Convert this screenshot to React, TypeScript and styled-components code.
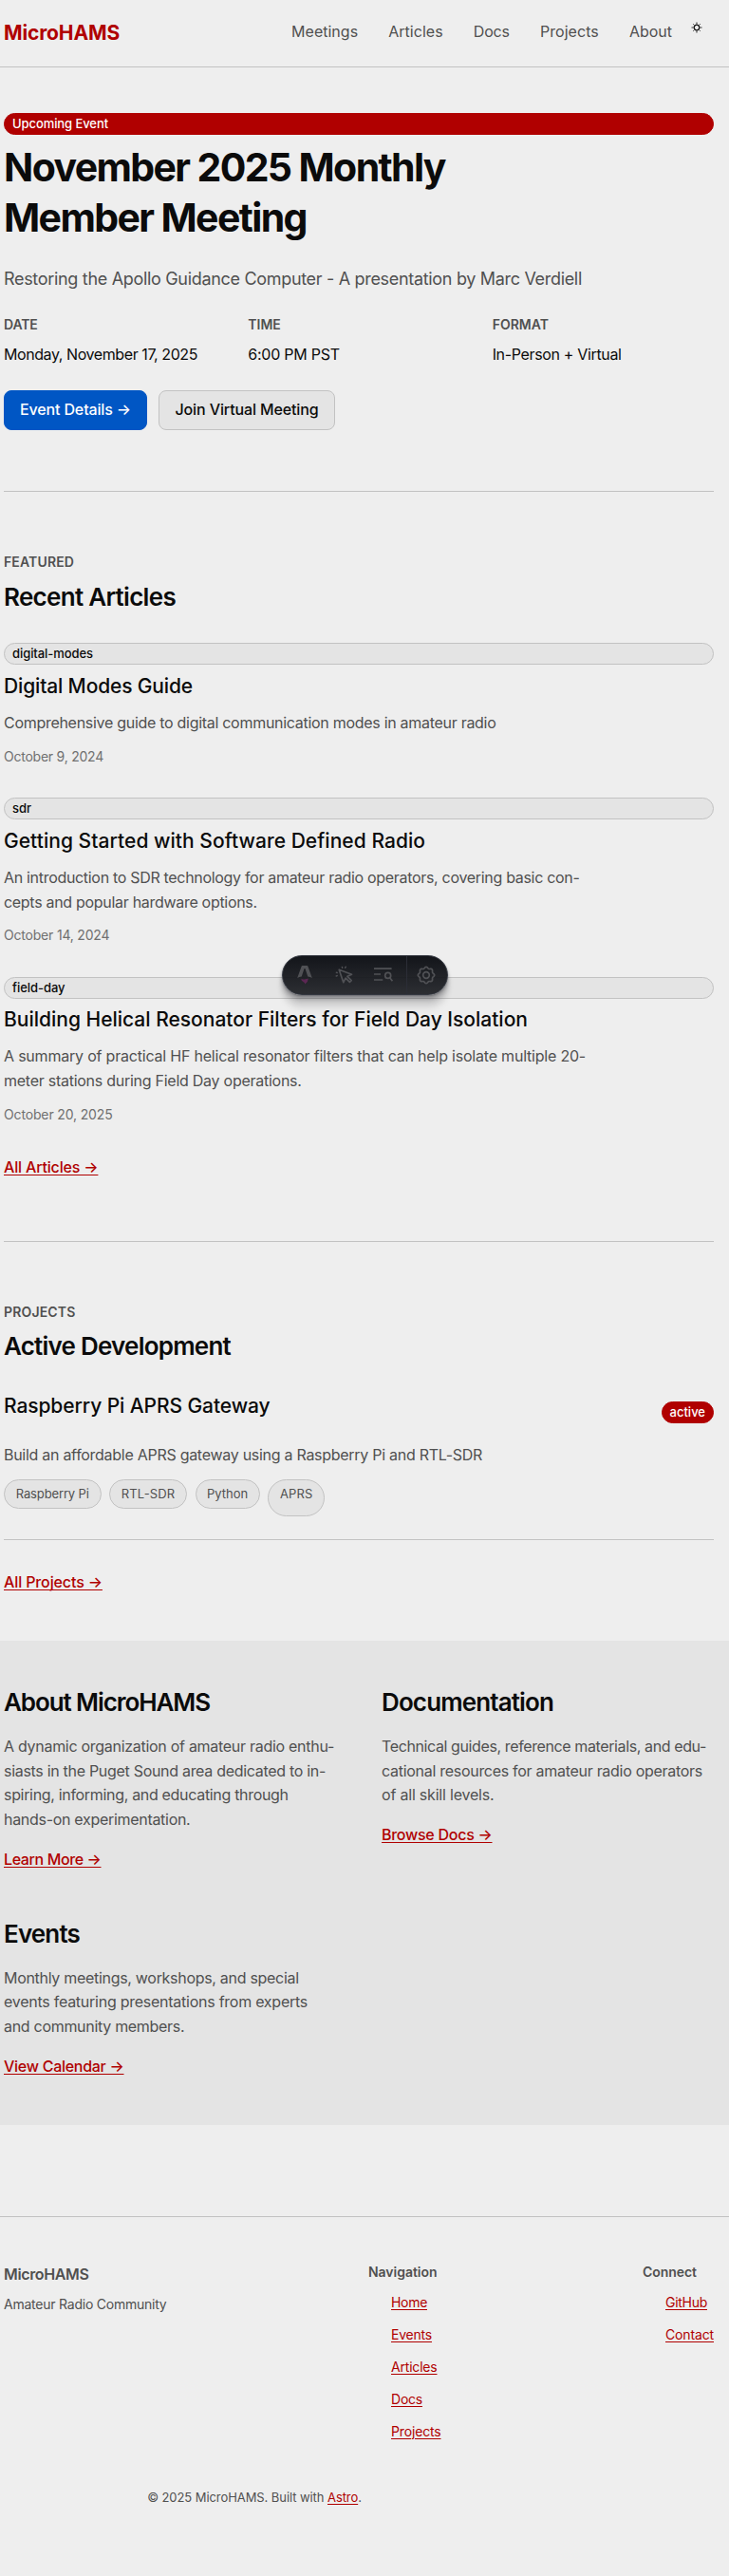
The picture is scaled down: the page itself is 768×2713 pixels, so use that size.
import React from "react";
import styled, { createGlobalStyle, css } from "styled-components";

const color = {
  bg: "#eeeeee",
  surface: "#e4e4e4",
  line: "#c2c2c2",
  ink: "#0b0b0b",
  muted: "#505050",
  faint: "#707070",
  red: "#b00000",
  blue: "#0056c4",
};

const GlobalStyle = createGlobalStyle`
  *, *::before, *::after { box-sizing: border-box; }
  html, body { margin: 0; background: ${color.bg}; }
  body {
    color: ${color.ink};
    font-family: Inter, "Liberation Sans", sans-serif;
    font-size: 16px;
    -webkit-font-smoothing: antialiased;
  }
  h1, h2, h3, h4, p, ul { margin: 0; padding: 0; }
  a { color: inherit; text-decoration: none; }
`;

type Tracked = { $ls?: number };
const tracking = css<Tracked>`
  letter-spacing: ${({ $ls = 0 }) => $ls}px;
  white-space: nowrap;
`;

const Page = styled.div`
  position: relative;
  min-height: 2713px;
`;

/* Header */
const Header = styled.header`
  display: flex;
  align-items: flex-start;
  justify-content: space-between;
  height: 71px;
  padding: 0 28px 0 4px;
  border-bottom: 1px solid ${color.line};
`;
const Logo = styled.a<Tracked>`
  margin-top: 23px;
  color: ${color.red};
  font-size: 21px;
  font-weight: 700;
  line-height: 24px;
  ${tracking}
`;
const Nav = styled.nav`
  display: flex;
  gap: 32.1px;
  margin-top: 20.5px;
`;
const NavLink = styled.a<Tracked>`
  color: ${color.muted};
  line-height: 24px;
  ${tracking}
`;
const ThemeToggle = styled.span`
  display: block;
  width: 12px;
  height: 12px;
  margin: 2px 0 0 -12.1px;
  svg { display: block; }
`;

/* Shared parts */
const Main = styled.main`
  padding: 0 16px 0 4px;
`;
const Section = styled.section<{ $top: number; $bottom: number; $rule?: boolean }>`
  padding: ${({ $top }) => $top}px 0 ${({ $bottom }) => $bottom}px;
  border-bottom: ${({ $rule }) => ($rule ? `1px solid ${color.line}` : "none")};
`;
const Badge = styled.span<Tracked & { $accent?: boolean }>`
  display: block;
  height: 23.25px;
  padding: 0 8px;
  border: 1px solid ${({ $accent }) => ($accent ? color.red : color.line)};
  border-radius: 12px;
  background: ${({ $accent }) => ($accent ? color.red : color.surface)};
  color: ${({ $accent }) => ($accent ? "#fff" : color.ink)};
  font-size: 13px;
  font-weight: 500;
  line-height: 21px;
  ${tracking}
`;
const Label = styled.div<Tracked>`
  color: ${color.muted};
  font-size: 14px;
  font-weight: 600;
  line-height: 18px;
  ${tracking}
`;
const Heading = styled.h2<Tracked>`
  font-size: 26px;
  font-weight: 600;
  line-height: 32px;
  ${tracking}
`;
const SectionHeading = styled(Heading)`
  margin-top: 11.5px;
`;
const Title = styled.h3<Tracked>`
  font-size: 21px;
  font-weight: 500;
  line-height: 28px;
  ${tracking}
`;
const Copy = styled.p`
  color: ${color.muted};
  line-height: 25.6px;
`;
const Line = styled.span<Tracked>`
  display: block;
  ${tracking}
`;
const MoreLink = styled.a<Tracked>`
  display: block;
  width: fit-content;
  color: ${color.red};
  font-weight: 500;
  line-height: 24px;
  text-decoration: underline 1px;
  text-underline-offset: 2px;
  text-decoration-skip-ink: none;
  ${tracking}
`;

/* Hero */
const HeroTitle = styled.h1`
  margin-top: 7.75px;
  font-size: 41px;
  font-weight: 700;
  line-height: 53px;
`;
const Subtitle = styled.p<Tracked>`
  margin-top: 24px;
  color: ${color.muted};
  font-size: 18px;
  line-height: 28px;
  ${tracking}
`;
const Facts = styled.div`
  display: grid;
  grid-template-columns: repeat(3, 1fr);
  gap: 24px;
  margin-top: 25px;
`;
const FactValue = styled.div<Tracked>`
  margin-top: 10px;
  line-height: 24px;
  ${tracking}
`;
const Actions = styled.div`
  display: flex;
  gap: 12px;
  margin-top: 26px;
`;
const Button = styled.a<Tracked & { $primary?: boolean; $width: number }>`
  width: ${({ $width }) => $width}px;
  height: 42px;
  border: 1px solid ${({ $primary }) => ($primary ? color.blue : color.line)};
  border-radius: 8px;
  background: ${({ $primary }) => ($primary ? color.blue : color.surface)};
  color: ${({ $primary }) => ($primary ? "#fff" : color.ink)};
  font-weight: 500;
  line-height: 39px;
  text-align: center;
  ${tracking}
`;

/* Articles */
const ArticleList = styled.div`
  display: flex;
  flex-direction: column;
  gap: 33.4px;
  margin: 32.7px 0 33px;
`;
const ArticleTitle = styled(Title)`
  margin: 8.2px 0 12.4px;
`;
const DateText = styled.time<Tracked>`
  display: block;
  margin-top: 12.1px;
  color: ${color.faint};
  font-size: 14px;
  line-height: 20px;
  ${tracking}
`;

/* Projects */
const Project = styled.article`
  padding-bottom: 24px;
  margin: 32.5px 0 32px;
  border-bottom: 1px solid ${color.line};
`;
const ProjectHead = styled.div`
  display: flex;
  justify-content: space-between;
  height: 53.4px;
  & > ${Badge} { margin-top: 9px; height: 23px; }
`;
const Tags = styled.div`
  display: flex;
  align-items: flex-start;
  gap: 8.8px;
  margin-top: 12.2px;
`;
const Tag = styled.span<Tracked & { $width: number; $tall?: boolean }>`
  width: ${({ $width }) => $width}px;
  height: ${({ $tall }) => ($tall ? 39 : 31)}px;
  border: 1px solid ${color.line};
  border-radius: 20px;
  background: ${color.surface};
  color: ${color.muted};
  font-size: 13px;
  line-height: 28px;
  text-align: center;
  ${tracking}
`;

/* Info band */
const Band = styled.section`
  display: grid;
  grid-template-columns: 350px 350px;
  column-gap: 48px;
  row-gap: 50.8px;
  height: 510px;
  align-content: start;
  padding: 49.3px 16px 0 4px;
  background: ${color.surface};
`;
const BandCopy = styled(Copy)`
  margin: 18px 0 16.6px;
`;

/* Footer */
const Footer = styled.footer`
  margin-top: 96px;
  padding: 48px 16px 0 4px;
  border-top: 1px solid ${color.line};
  color: ${color.muted};
`;
const FooterColumns = styled.div`
  display: flex;
  justify-content: space-between;
`;
const FooterBrand = styled.div<Tracked>`
  font-weight: 600;
  line-height: 24px;
  ${tracking}
`;
const FooterText = styled.p<Tracked>`
  margin-top: 10px;
  font-size: 14px;
  line-height: 20px;
  ${tracking}
`;
const FooterHeading = styled.h4<Tracked>`
  font-size: 14px;
  font-weight: 600;
  line-height: 20px;
  ${tracking}
`;
const FooterLinks = styled.ul`
  display: flex;
  flex-direction: column;
  align-items: flex-start;
  gap: 14px;
  margin-top: 12px;
  padding-left: 24px;
  list-style: none;
`;
const FooterLink = styled.a<Tracked>`
  display: block;
  color: ${color.red};
  font-size: 14px;
  line-height: 20px;
  text-decoration: underline 1px;
  text-underline-offset: 2px;
  ${tracking}
`;
const Copyright = styled.p<Tracked>`
  width: 528px;
  margin-top: 49px;
  font-size: 13px;
  line-height: 20px;
  text-align: center;
  a {
    color: ${color.red};
    text-decoration: underline 1px;
    text-underline-offset: 2px;
  }
  ${tracking}
`;

/* Floating developer toolbar */
const Toolbar = styled.div`
  position: absolute;
  top: 1006px;
  left: 296.5px;
  display: flex;
  width: 175px;
  height: 42px;
  overflow: hidden;
  border: 1px solid #343841;
  border-radius: 999px;
  background: linear-gradient(180deg, rgba(19, 21, 26, 1) 0%, rgba(19, 21, 26, 0.88) 100%);
  box-shadow: 0 1px 2px 0 rgba(19, 21, 26, 0.29), 0 4px 4px 0 rgba(19, 21, 26, 0.26),
    0 10px 6px 0 rgba(19, 21, 26, 0.15), 0 17px 7px 0 rgba(19, 21, 26, 0.04);
`;
const ToolItem = styled.span<{ $width: number; $divided?: boolean }>`
  display: flex;
  align-items: center;
  justify-content: center;
  width: ${({ $width }) => $width}px;
  height: 40px;
  border-left: ${({ $divided }) => ($divided ? "1.5px solid #2b2d36" : "none")};
`;

const iconStroke = { fill: "none", stroke: "#505155", strokeWidth: 1.7, strokeLinecap: "round", strokeLinejoin: "round" } as const;

const SunIcon = () => (
  <svg width="12" height="12" viewBox="-6 -6 12 12">
    <circle r="2.8" fill="none" stroke="#111" strokeWidth="1.3" />
    <path d="M0-3.4V-5.5M0 3.4V5.5M-3.4 0H-5.5M3.4 0H5.5" stroke="#333" strokeWidth="1.1" />
    <path d="M-2.5-2.5L-3.8-3.8M2.5-2.5L3.8-3.8M-2.5 2.5L-3.8 3.8M2.5 2.5L3.8 3.8" stroke="#444" strokeWidth="1" />
  </svg>
);

const RocketIcon = () => (
  <svg width="16" height="20" viewBox="0 0 16 20">
    <path
      d="M4.7.4Q4.9 0 5.4 0H10.6Q11.1 0 11.3.4L15.8 13Q13.6 11.9 11.3 11.6L8.5 3.3Q8 2.3 7.5 3.3L4.7 11.6Q2.4 11.9.2 13Z"
      fill="#505155"
    />
    <path d="M4.3 13.8Q6 15 8 14.4Q10.3 13.4 11.8 13.7Q11.8 16.6 8.2 19.6Q8.3 17.6 6.4 17Q4.3 16 4.3 13.8Z" fill="#5b2753" />
  </svg>
);

const PointerIcon = () => (
  <svg width="20" height="20" viewBox="0 0 20 20" {...iconStroke}>
    <path d="M4.2 4.2L17.6 9.2L12.9 11.3L17.2 15.6L15.4 17.4L11.1 13.1L8.8 17.7Z" />
    <path d="M7.4 1.5L7.7 2.3M11.2 1.2L10.7 2.3M1.4 7.2L2.2 7.5M1.2 11L2.2 10.6" strokeWidth="1.5" />
  </svg>
);

const AuditIcon = () => (
  <svg width="20" height="16" viewBox="0 0 20 16" {...iconStroke} strokeLinecap="butt">
    <path d="M0 1.2H18.6M0 7H7M0 13H9.3" />
    <circle cx="14.7" cy="8.4" r="3" />
    <path d="M16.6 10.8L19.4 14.2" />
  </svg>
);

const gearPath =
  Array.from({ length: 97 }, (_, i) => {
    const angle = (i / 96) * Math.PI * 2;
    const radius = 7.9 + 0.75 * Math.cos(angle * 8);
    return `${i ? "L" : "M"}${(radius * Math.cos(angle)).toFixed(2)} ${(radius * Math.sin(angle)).toFixed(2)}`;
  }).join("") + "Z";

const GearIcon = () => (
  <svg width="20" height="20" viewBox="-10 -10 20 20" {...iconStroke}>
    <path d={gearPath} />
    <circle r="3.3" />
  </svg>
);

type Text = [string, number];

const navItems: Text[] = [
  ["Meetings", 0.008],
  ["Articles", 0.035],
  ["Docs", -0.184],
  ["Projects", 0.07],
  ["About", -0.025],
];

const facts: { label: Text; value: Text }[] = [
  { label: ["DATE", -0.15], value: ["Monday, November 17, 2025", -0.419] },
  { label: ["TIME", 0], value: ["6:00 PM PST", -0.246] },
  { label: ["FORMAT", 0], value: ["In-Person + Virtual", -0.338] },
];

const articles: { tag: Text; title: Text; lines: Text[]; date: Text }[] = [
  {
    tag: ["digital-modes", -0.067],
    title: ["Digital Modes Guide", -0.149],
    lines: [["Comprehensive guide to digital communication modes in amateur radio", -0.289]],
    date: ["October 9, 2024", -0.234],
  },
  {
    tag: ["sdr", -0.06],
    title: ["Getting Started with Software Defined Radio", 0.043],
    lines: [
      ["An introduction to SDR technology for amateur radio operators, covering basic con-", -0.312],
      ["cepts and popular hardware options.", -0.3],
    ],
    date: ["October 14, 2024", -0.2],
  },
  {
    tag: ["field-day", -0.045],
    title: ["Building Helical Resonator Filters for Field Day Isolation", -0.003],
    lines: [
      ["A summary of practical HF helical resonator filters that can help isolate multiple 20-", -0.206],
      ["meter stations during Field Day operations.", -0.26],
    ],
    date: ["October 20, 2025", -0.149],
  },
];

const tags: { text: Text; width: number; tall?: boolean }[] = [
  { text: ["Raspberry Pi", -0.132], width: 102.5 },
  { text: ["RTL-SDR", 0.132], width: 81.5 },
  { text: ["Python", -0.036], width: 68 },
  { text: ["APRS", 0.1], width: 59.5, tall: true },
];

const info: { title: Text; lines: Text[]; link: Text }[] = [
  {
    title: ["About MicroHAMS", -1.089],
    lines: [
      ["A dynamic organization of amateur radio enthu-", -0.286],
      ["siasts in the Puget Sound area dedicated to in-", -0.3],
      ["spiring, informing, and educating through", -0.32],
      ["hands-on experimentation.", -0.3],
    ],
    link: ["Learn More →", -0.38],
  },
  {
    title: ["Documentation", -0.871],
    lines: [
      ["Technical guides, reference materials, and edu-", -0.388],
      ["cational resources for amateur radio operators", -0.286],
      ["of all skill levels.", -0.2],
    ],
    link: ["Browse Docs →", -0.264],
  },
  {
    title: ["Events", -0.841],
    lines: [
      ["Monthly meetings, workshops, and special", -0.3],
      ["events featuring presentations from experts", -0.255],
      ["and community members.", -0.3],
    ],
    link: ["View Calendar →", -0.274],
  },
];

const footerGroups: { heading: Text; links: Text[] }[] = [
  {
    heading: ["Navigation", -0.031],
    links: [
      ["Home", -0.309],
      ["Events", -0.214],
      ["Articles", -0.195],
      ["Docs", -0.223],
      ["Projects", -0.158],
    ],
  },
  {
    heading: ["Connect", -0.051],
    links: [
      ["GitHub", -0.279],
      ["Contact", -0.141],
    ],
  },
];

const Lines = ({ lines }: { lines: Text[] }) => (
  <>
    {lines.map(([text, ls]) => (
      <Line key={text} $ls={ls}>{text}</Line>
    ))}
  </>
);

export default function App() {
  return (
    <Page>
      <GlobalStyle />
      <Header>
        <Logo href="#" $ls={-0.135}>MicroHAMS</Logo>
        <Nav>
          {navItems.map(([text, ls]) => (
            <NavLink key={text} href="#" $ls={ls}>{text}</NavLink>
          ))}
          <ThemeToggle><SunIcon /></ThemeToggle>
        </Nav>
      </Header>

      <Main>
        <Section $top={48} $bottom={64} $rule>
          <Badge $accent $ls={-0.08}>Upcoming Event</Badge>
          <HeroTitle>
            <Line $ls={-1.62}>November 2025 Monthly</Line>
            <Line $ls={-1.6}>Member Meeting</Line>
          </HeroTitle>
          <Subtitle $ls={-0.316}>Restoring the Apollo Guidance Computer - A presentation by Marc Verdiell</Subtitle>
          <Facts>
            {facts.map(({ label, value }) => (
              <div key={label[0]}>
                <Label $ls={label[1]}>{label[0]}</Label>
                <FactValue $ls={value[1]}>{value[0]}</FactValue>
              </div>
            ))}
          </Facts>
          <Actions>
            <Button href="#" $primary $width={151} $ls={-0.136}>Event Details →</Button>
            <Button href="#" $width={186} $ls={-0.125}>Join Virtual Meeting</Button>
          </Actions>
        </Section>

        <Section $top={65} $bottom={65.8} $rule>
          <Label $ls={0.14}>FEATURED</Label>
          <SectionHeading $ls={-0.7}>Recent Articles</SectionHeading>
          <ArticleList>
            {articles.map(({ tag, title, lines, date }) => (
              <article key={title[0]}>
                <Badge $ls={tag[1]}>{tag[0]}</Badge>
                <ArticleTitle $ls={title[1]}>{title[0]}</ArticleTitle>
                <Copy><Lines lines={lines} /></Copy>
                <DateText $ls={date[1]}>{date[0]}</DateText>
              </article>
            ))}
          </ArticleList>
          <MoreLink href="#" $ls={-0.17}>All Articles →</MoreLink>
        </Section>

        <Section $top={65} $bottom={50}>
          <Label $ls={0.16}>PROJECTS</Label>
          <SectionHeading $ls={-0.773}>Active Development</SectionHeading>
          <Project>
            <ProjectHead>
              <Title $ls={-0.087}>Raspberry Pi APRS Gateway</Title>
              <Badge $accent>active</Badge>
            </ProjectHead>
            <Copy><Line $ls={-0.279}>Build an affordable APRS gateway using a Raspberry Pi and RTL-SDR</Line></Copy>
            <Tags>
              {tags.map(({ text, width, tall }) => (
                <Tag key={text[0]} $ls={text[1]} $width={width} $tall={tall}>{text[0]}</Tag>
              ))}
            </Tags>
          </Project>
          <MoreLink href="#" $ls={-0.12}>All Projects →</MoreLink>
        </Section>
      </Main>

      <Band>
        {info.map(({ title, lines, link }) => (
          <div key={title[0]}>
            <Heading $ls={title[1]}>{title[0]}</Heading>
            <BandCopy><Lines lines={lines} /></BandCopy>
            <MoreLink href="#" $ls={link[1]}>{link[0]}</MoreLink>
          </div>
        ))}
      </Band>

      <Footer>
        <FooterColumns>
          <div>
            <FooterBrand $ls={-0.361}>MicroHAMS</FooterBrand>
            <FooterText $ls={-0.23}>Amateur Radio Community</FooterText>
          </div>
          {footerGroups.map(({ heading, links }) => (
            <div key={heading[0]}>
              <FooterHeading $ls={heading[1]}>{heading[0]}</FooterHeading>
              <FooterLinks>
                {links.map(([text, ls]) => (
                  <li key={text}><FooterLink href="#" $ls={ls}>{text}</FooterLink></li>
                ))}
              </FooterLinks>
            </div>
          ))}
        </FooterColumns>
        <Copyright $ls={-0.075}>© 2025 MicroHAMS. Built with <a href="#">Astro</a>.</Copyright>
      </Footer>

      <Toolbar>
        <ToolItem $width={47}><RocketIcon /></ToolItem>
        <ToolItem $width={36}><PointerIcon /></ToolItem>
        <ToolItem $width={47}><AuditIcon /></ToolItem>
        <ToolItem $width={41} $divided><GearIcon /></ToolItem>
      </Toolbar>
    </Page>
  );
}
